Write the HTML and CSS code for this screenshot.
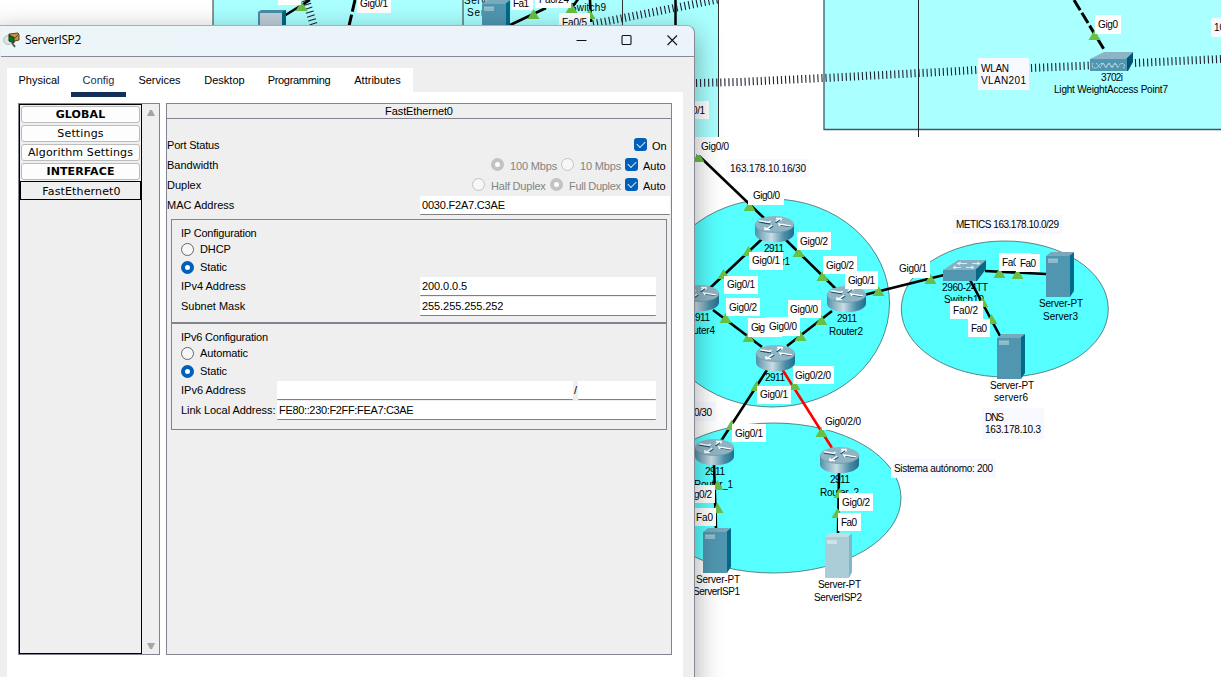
FILE: index.html
```html
<!DOCTYPE html>
<html lang="es">
<head>
<meta charset="utf-8">
<title>ServerISP2</title>
<link rel="stylesheet" href="styles.css">
</head>
<body>
<main class="workspace">
<svg class="topology" width="1221" height="677" viewBox="0 0 1221 677">
  <defs>
    <linearGradient id="metal" x1="0" x2="1" y1="0" y2="0">
      <stop offset="0" stop-color="#4f8fa9"/><stop offset=".15" stop-color="#7fadbf"/><stop offset=".42" stop-color="#c8dce4"/><stop offset=".75" stop-color="#4d8da8"/><stop offset="1" stop-color="#1e6f8c"/>
    </linearGradient>
    <symbol id="router" viewBox="0 0 39 27" overflow="visible">
      <path d="M0 8V18C2 29 37 29 39 18V8Z" fill="url(#metal)"/>
      <ellipse cx="19.5" cy="8.3" rx="19.5" ry="8.3" fill="#8fb4c4"/>
      <path d="M0 8.5C1 19 38 19 39 8.5" fill="none" stroke="#6d9cb0" stroke-width=".8"/>
      <g fill="none" stroke="#164f66" stroke-width="2.2"><path d="M4 5.5L15 7.500M36 10L24 8.500M20.500 6.500L25 3M18 9.500l-6 4"/></g>
      <g fill="none" stroke="#fff" stroke-width="1.5"><path d="M4 4.700L14 6.500l1.500-1.500M36 9.700L24 8l1 2M20.500 5.500L25 2.500M21 2.400h5v2M17.500 9.200l-6.300 4M10 11v2.500h5"/></g>
    </symbol>
    <symbol id="server" viewBox="0 0 28 45" overflow="visible">
      <path d="M0 4L5 0H28L23 4Z" fill="#78a9bd"/>
      <path d="M23 4L28 0V39L24 45H23Z" fill="#006b88"/>
      <path d="M0 4H24V45H0Z" fill="#5096b0"/>
      <path d="M2 7H12V11H2Z" fill="#8fbacb"/>
      <path d="M2 7H12" stroke="#b0d0db" stroke-width=".7"/>
    </symbol>
    <symbol id="server-on" viewBox="0 0 28 45" overflow="visible">
      <path d="M0 4L5 0H27L23 4Z" fill="#c3dde5"/>
      <path d="M23 4L27 0V39L24 45H23Z" fill="#7eb7c8"/>
      <path d="M0 4H24V45H0Z" fill="#abcdd8"/>
      <path d="M2 7H12V11H2Z" fill="#cde2e8"/>
    </symbol>
    <path id="up" d="M-5.500 0L.5-10L6.500 0Z" fill="#68bf45"/>
  </defs>

  <rect width="1221" height="677" fill="#fff"/>
  <path d="M213-1H718.5V137H213Z" fill="#aff"/>
  <path d="M213 0V137M463 0V137M622.500 0V137M718.500 0V137" stroke="#333" fill="none"/>
  <path d="M675.500 0V26" stroke="#000" stroke-width="2.500"/>
  <path d="M824-1H1222V129.500H824Z" fill="#aff" stroke="#456" stroke-width="1.300"/>
  <path d="M918.500 0V137" stroke="#222"/>
  <g fill="#5ff" stroke="#466" stroke-width=".8">
    <ellipse cx="772" cy="303" rx="117.500" ry="104"/>
    <ellipse cx="773.500" cy="498" rx="127.500" ry="75"/>
    <ellipse cx="1004.800" cy="309" rx="103.500" ry="68"/>
  </g>

  <g class="wireless">
    <path d="M696 83L738 82L824 78L950 71.500L977 70"/>
    <path d="M1031 68L1090 65.500"/>
    <path d="M1135 63L1221 59"/>
    <path d="M593 24L720-1"/>
    <path d="M306 0L314 26"/>
  </g>

  <g class="label">
    <text x="1101" y="81" textLength="22">3702i</text>
    <text x="1054" y="93" textLength="114">Light WeightAccess Point7</text>
    <text x="764" y="252" textLength="20">2911</text>
    <text x="758" y="265" textLength="32">Router1</text>
    <text x="837" y="322" textLength="20">2911</text>
    <text x="829" y="335" textLength="34">Router2</text>
    <text x="690" y="321" textLength="20">2911</text>
    <text x="681" y="334" textLength="34">Router4</text>
    <text x="765" y="381" textLength="20">2911</text>
    <text x="942" y="291" textLength="46">2960-24TT</text>
    <text x="944" y="303" textLength="40">Switch10</text>
    <text x="1039" y="307" textLength="44">Server-PT</text>
    <text x="1043" y="320" textLength="35">Server3</text>
    <text x="990" y="389" textLength="44">Server-PT</text>
    <text x="994" y="401" textLength="34">server6</text>
    <text x="696" y="583" textLength="44">Server-PT</text>
    <text x="693" y="595" textLength="47">ServerISP1</text>
    <text x="818" y="588" textLength="43">Server-PT</text>
    <text x="814" y="601" textLength="48">ServerISP2</text>
    <text x="705" y="475" textLength="20">2911</text>
    <text x="694" y="488" textLength="39">Router_1</text>
    <text x="830" y="483" textLength="20">2911</text>
    <text x="820" y="496" textLength="39">Router_2</text>
    <text x="464" y="4" textLength="22">Serv</text>
    <text x="467" y="16" textLength="34">Server</text>
    <text x="570" y="11" textLength="36">Switch9</text>
  </g>

  <g class="link">
    <path d="M697 154L764 218M762 239L710 288M786 240L836 289M866 294.500L944 275M713 310L762 347M832 311L787 346M767 370L721 441M714 465L716 529M839 473L838 534M985 271L1046 274M970 280L1000 336"/>
    <path d="M284 16L310 0M508 26L546 8M573 6L579-2M590 0L591 22"/>
    <path class="alert" d="M782 369L832 448"/>
    <path class="dashed" d="M1074 0L1105 51"/>
    <path class="dashed" d="M355 0L349 26"/>
  </g>

  <g>
    <use href="#router" x="755" y="216" width="39" height="27"/>
    <use href="#router" x="827" y="286" width="39" height="27"/>
    <use href="#router" x="680" y="285" width="39" height="27"/>
    <use href="#router" x="756" y="345" width="39" height="27"/>
    <use href="#router" x="695" y="439" width="39" height="27"/>
    <use href="#router" x="820" y="447" width="39" height="27"/>
    <use href="#server" x="1046" y="252" width="28" height="45"/>
    <use href="#server" x="997" y="334" width="28" height="45"/>
    <use href="#server" x="703" y="528" width="28" height="45"/>
    <use href="#server-on" x="825" y="533" width="28" height="45"/>
    <use href="#server" x="482" y="0" width="28" height="45"/>
    <g transform="translate(943 260)">
      <path d="M0 10L15 0H43L32 10Z" fill="#86b1c2"/><path d="M32 10L43 0V9L34 21H32Z" fill="#096783"/><path d="M0 10H33V21H0Z" fill="#5096b0"/>
      <path d="M15 3.500h9m-6-1.500l-4 1.500 3 1M29 3.500h8m-3-1.500l3 1.500-3 1M10 7.500h8m-5-1.500l-3 1.500 3 1M23 7.500h8m-3-1.500l3 1.500-3 1" fill="none" stroke="#eef8fa" stroke-width=".8"/>
    </g>
    <g transform="translate(1090 52)">
      <path d="M0 7L14 0H43L36 7Z" fill="#8bb5c6"/><path d="M36 7L43 0V10L38 19H36Z" fill="#005570"/><path d="M0 7H37V19H0Z" fill="#5096b0"/>
      <path d="M3 11l-1 2 1 3h4l3-4 3-1 3 4 3-4 3 4 3-4 3 4 3-4 3 1 1 3-2 1M6 11l4 5 3-5 3 5 3-5 3 5 3-5 3 5" fill="none" stroke="#d5ebf1" stroke-width=".8" stroke-dasharray="2 1"/>
    </g>
    <path d="M258 12L261 10H286V26H258Z" fill="#458ea6"/><path d="M282 12L286 10V26H282Z" fill="#006783"/><path d="M260 13H282V26H260Z" fill="#bdcdd6"/>
  </g>

  <g>
    <use href="#up" x="698" y="162"/><use href="#up" x="749" y="211"/><use href="#up" x="748" y="256"/><use href="#up" x="723" y="279"/>
    <use href="#up" x="798" y="257"/><use href="#up" x="822" y="281"/><use href="#up" x="878" y="296"/><use href="#up" x="725" y="323"/>
    <use href="#up" x="821" y="325"/><use href="#up" x="748" y="342"/><use href="#up" x="800" y="341"/><use href="#up" x="756" y="391"/>
    <use href="#up" x="731" y="430"/><use href="#up" x="794" y="390"/><use href="#up" x="821" y="437"/><use href="#up" x="930" y="284"/>
    <use href="#up" x="999" y="278"/><use href="#up" x="1017" y="279"/><use href="#up" x="982" y="307"/><use href="#up" x="991" y="324"/>
    <use href="#up" x="1094" y="40"/><use href="#up" x="717" y="490"/><use href="#up" x="717" y="513"/><use href="#up" x="839" y="498"/>
    <use href="#up" x="837" y="518"/><use href="#up" x="301" y="11"/><use href="#up" x="533" y="19"/><use href="#up" x="571" y="13"/><use href="#up" x="589" y="19"/>
  </g>

  <g class="port">
    <rect x="748" y="187" width="36" height="18"/><text x="753" y="199" textLength="27">Gig0/0</text>
    <rect x="797" y="232" width="34" height="18"/><text x="800" y="245" textLength="28">Gig0/2</text>
    <rect x="749" y="252" width="34" height="18"/><text x="752" y="264" textLength="28">Gig0/1</text>
    <rect x="724" y="276" width="34" height="18"/><text x="727" y="288" textLength="28">Gig0/1</text>
    <rect x="726" y="298" width="34" height="18"/><text x="729" y="311" textLength="28">Gig0/2</text>
    <rect x="788" y="300" width="33" height="18"/><text x="790" y="313" textLength="28">Gig0/0</text>
    <rect x="823" y="256" width="34" height="18"/><text x="826" y="269" textLength="28">Gig0/2</text>
    <rect x="845" y="271" width="33" height="18"/><text x="848" y="284" textLength="27">Gig0/1</text>
    <rect x="748" y="318" width="34" height="19"/><text x="751" y="331" textLength="14">Gig</text>
    <rect x="766" y="317" width="34" height="19"/><text x="769" y="330" textLength="28">Gig0/0</text>
    <rect x="793" y="366" width="41" height="18"/><text x="795" y="379" textLength="36">Gig0/2/0</text>
    <rect x="757" y="386" width="34" height="18"/><text x="760" y="398" textLength="28">Gig0/1</text>
    <rect x="732" y="424" width="34" height="18"/><text x="735" y="437" textLength="28">Gig0/1</text>
    <rect x="822" y="412" width="42" height="18"/><text x="825" y="425" textLength="36">Gig0/2/0</text>
    <rect x="839" y="493" width="34" height="18"/><text x="842" y="506" textLength="28">Gig0/2</text>
    <rect x="838" y="513" width="23" height="18"/><text x="841" y="526" textLength="16">Fa0</text>
    <rect x="683" y="485" width="32" height="18"/><text x="685" y="498" textLength="27">Gig0/2</text>
    <rect x="690" y="508" width="26" height="18"/><text x="696" y="521" textLength="17">Fa0</text>
    <rect x="896" y="259" width="34" height="19"/><text x="899" y="272" textLength="28">Gig0/1</text>
    <rect x="999" y="253" width="32" height="18"/><text x="1002" y="266" textLength="24">Fa0/1</text>
    <rect x="1016" y="254" width="24" height="18"/><text x="1020" y="267" textLength="16">Fa0</text>
    <rect x="950" y="301" width="33" height="18"/><text x="953" y="314" textLength="25">Fa0/2</text>
    <rect x="968" y="319" width="22" height="18"/><text x="971" y="332" textLength="16">Fa0</text>
    <rect x="1095" y="15" width="26" height="19"/><text x="1098" y="28" textLength="20">Gig0</text>
    <rect x="676" y="101" width="33" height="18"/><text x="678" y="114" textLength="27">Gig0/1</text>
    <rect x="697" y="137" width="35" height="18"/><text x="701" y="150" textLength="28">Gig0/0</text>
    <rect x="278" y="-5" width="23" height="10"/>
    <rect x="357" y="-5" width="34" height="18"/><text x="360" y="7" textLength="28">Gig0/1</text>
    <rect x="511" y="-5" width="22" height="15"/><text x="513" y="7" textLength="16">Fa1</text>
    <rect x="535" y="-5" width="36" height="13"/><text x="539" y="3" textLength="30">Fa0/24</text>
    <rect x="559" y="13" width="31" height="18"/><text x="562" y="26" textLength="25">Fa0/5</text>
  </g>

  <g class="note">
    <rect x="726" y="159" width="83" height="19"/><text x="730" y="172" textLength="76">163.178.10.16/30</text>
    <rect x="953" y="215" width="109" height="19"/><text x="956" y="228" textLength="103">METICS 163.178.10.0/29</text>
    <rect x="982" y="408" width="62" height="31"/><text x="985" y="421" textLength="19">DNS</text><text x="985" y="433" textLength="56">163.178.10.3</text>
    <rect x="891" y="459" width="105" height="19"/><text x="894" y="472" textLength="99">Sistema autónomo: 200</text>
    <rect x="680" y="402" width="36" height="19"/><text x="694" y="416" textLength="18">0/30</text>
    <rect x="978" y="58" width="51" height="32"/><text x="981" y="72" textLength="28">WLAN</text><text x="981" y="84" textLength="45">VLAN201</text>
    <rect x="1211" y="18" width="30" height="19"/><text x="1214" y="31">10.</text>
  </g>
</svg>

<section class="window">
  <header class="titlebar">
    <svg class="app-icon" width="17" height="17" viewBox="0 0 17 17">
      <path d="M6 2L15 1 16 3V8L8 10 5 8Z" fill="#c6903d" stroke="#5a4520"/><path d="M6 3l6 3 4-4" fill="none" stroke="#6a4b18"/>
      <ellipse cx="5" cy="8" rx="4.500" ry="4.500" fill="#d9e3df" stroke="#b4beb9"/><path d="M6 3L11 6V11L6 9Z" fill="#087324" stroke="#123d18"/><path d="M9 11l3 4" stroke="#555" stroke-width="1.800"/>
    </svg>
    <h1 class="title">ServerISP2</h1>
    <svg class="controls" width="104" height="12" viewBox="0 0 104 12" fill="none" stroke="#111" stroke-width="1.100"><path d="M.5 6.500h10"/><rect x="46" y="1.500" width="9" height="9" rx="1"/><path d="M91.500 1.500l9.500 9.500M101 1.500L91.500 11"/></svg>
  </header>
  <div class="client">
    <nav class="tabs">
      <span class="tab">Physical</span><span class="tab active">Config</span><span class="tab">Services</span><span class="tab">Desktop</span><span class="tab tight">Programming</span><span class="tab">Attributes</span>
    </nav>
    <div class="page">
      <aside class="sidebar">
        <div class="list">
          <button class="item heading">GLOBAL</button>
          <button class="item">Settings</button>
          <button class="item">Algorithm Settings</button>
          <button class="item heading">INTERFACE</button>
          <button class="item selected">FastEthernet0</button>
        </div>
        <div class="scroll">
          <svg width="8" height="6" viewBox="0 0 8 6"><path d="M0 6L3 0H5L8 6Z" fill="#a5a5a5"/></svg>
          <svg width="8" height="6" viewBox="0 0 8 6"><path d="M0 0L3 6H5L8 0Z" fill="#a5a5a5"/></svg>
        </div>
      </aside>
      <div class="panel">
        <h2 class="panel-title">FastEthernet0</h2>
        <div class="rows">
          <div class="row"><span class="snug">Port Status</span><span class="options"><i class="check"></i><span class="on">On</span></span></div>
          <div class="row"><span>Bandwidth</span><span class="options"><i class="radio off set"></i><span class="muted w100">100 Mbps</span><i class="radio off"></i><span class="muted w10">10 Mbps</span><i class="check"></i><span class="auto">Auto</span></span></div>
          <div class="row"><span>Duplex</span><span class="options"><i class="radio off"></i><span class="muted whalf">Half Duplex</span><i class="radio off set"></i><span class="muted wfull">Full Duplex</span><i class="check"></i><span class="auto">Auto</span></span></div>
          <div class="row"><span>MAC Address</span><span class="field mac">0030.F2A7.C3AE</span></div>
        </div>
        <div class="group">
          <h3 class="legend">IP Configuration</h3>
          <div class="choice"><i class="radio"></i>DHCP</div>
          <div class="choice"><i class="radio set"></i>Static</div>
          <div class="row"><span>IPv4 Address</span><span class="field ip">200.0.0.5</span></div>
          <div class="row"><span>Subnet Mask</span><span class="field ip">255.255.255.252</span></div>
        </div>
        <div class="group six">
          <h3 class="legend">IPv6 Configuration</h3>
          <div class="choice"><i class="radio"></i>Automatic</div>
          <div class="choice"><i class="radio set"></i>Static</div>
          <div class="row"><span>IPv6 Address</span><span class="pair"><span class="field addr"></span><span class="slash">/</span><span class="field prefix"></span></span></div>
          <div class="row"><span class="local">Link Local Address:</span><span class="field link-local">FE80::230:F2FF:FEA7:C3AE</span></div>
        </div>
      </div>
    </div>
  </div>
</section>
</main>
</body>
</html>
```
FILE: styles.css
```css
* { box-sizing: border-box; }
body { margin: 0; background: #fff; color: #000; font: 11px "Liberation Sans", Arial, sans-serif; }
h1, h2, h3 { margin: 0; font-size: inherit; font-weight: normal; }
.workspace { position: relative; width: 1221px; height: 677px; overflow: hidden; }
.topology { display: block; font-size: 10px; }
.wireless { fill: none; stroke: #223; stroke-width: 8; stroke-dasharray: 1.1 2.95; }
.link { fill: none; stroke: #000; stroke-width: 2.6; }
.alert { stroke: #f00; }
.dashed { stroke-width: 3; stroke-dasharray: 12 3; }
.port rect { fill: #fff; }
.note rect { fill: #f8f8ff; }

.window { position: absolute; left: -8px; top: 25px; width: 703px; height: 670px; padding-left: 8px; overflow: hidden; border: 1px solid #858a96; border-top-color: #9bb5ba; border-radius: 8px 8px 0 0; background: #efefef; background-clip: padding-box; box-shadow: 0 8px 28px rgba(0, 0, 0, .36); }
.titlebar { display: flex; align-items: center; height: 31px; padding: 0 14px 2px 2px; border-bottom: 1px solid #858a96; background: linear-gradient(90deg, #ecf5f7, #ebf3fb); }
.app-icon { flex: none; margin-right: 5px; }
.title { font: 12px/20px "Open Sans", sans-serif; letter-spacing: -.4px; }
.controls { margin-left: auto; }
.client { padding: 11px 11px 0 6px; }
.tabs { display: grid; grid-template-columns: 64px 55px 67px 63px 86px 71px; width: 406px; height: 24px; background: #fff; }
.tab { border-bottom: 5px solid transparent; line-height: 24px; text-align: center; white-space: nowrap; }
.tab.active { border-color: #12305a; color: #12305a; }
.tab.tight { letter-spacing: -.3px; }
.page { display: flex; gap: 6px; height: 620px; padding: 11px 11px 0; background: #fff; }
.sidebar { display: flex; flex: none; width: 142px; height: 552px; border: 1px solid #83838f; background: #efefef; }
.list { display: flex; flex-direction: column; gap: 2px; width: 123px; padding: 1px; border: 1px solid #000; }
.item { flex: none; width: 119px; height: 17px; margin: 0; padding: 0; border: 1px solid #bcbcbc; border-radius: 3px; background: #fdfdfd; color: #000; font: 11px/15px "DejaVu Sans", sans-serif; letter-spacing: .15px; white-space: nowrap; }
.heading { font-weight: bold; letter-spacing: .1px; }
.selected { width: 121px; height: 19px; margin: -1px -1px 0 -1px; padding: 2px 0 0 2px; border-color: #000; border-radius: 0; background: #efefef; line-height: 16px; }
.scroll { display: flex; flex: 1; flex-direction: column; align-items: center; justify-content: space-between; padding: 6px 0 5px 1px; }
.panel { flex: none; width: 506px; height: 552px; border: 1px solid #83838f; background: #efefef; }
.panel-title { height: 15px; border-bottom: 1px solid #83838f; line-height: 15px; text-align: center; letter-spacing: -.1px; }
.rows { padding: 16px 1px 0 0; }
.row { display: flex; align-items: center; justify-content: space-between; height: 20px; white-space: nowrap; }
.snug { letter-spacing: -.2px; }
.options { display: flex; align-items: center; height: 15px; margin-top: -1px; padding-right: 4px; }
.options > span { position: relative; top: 1px; }
.check { display: flex; align-items: center; justify-content: center; width: 13px; height: 13px; margin-right: 5px; border-radius: 3px; background: #005fb8; }
.check::after { width: 7px; height: 4px; margin-top: -2px; border: solid #dceaff; border-width: 0 0 1px 1px; content: ""; transform: rotate(-45deg); }
.radio { flex: none; width: 13px; height: 13px; margin-right: 6px; border: 1px solid #666; border-radius: 50%; background: #f7f7f7; }
.radio.set { border: 4px solid #005fb8; background: #fff; }
.radio.off { border-color: #c3c3c3; }
.muted { color: #838383; letter-spacing: -.15px; }
.on { width: 14px; }
.auto { width: 23px; }
.w100 { width: 51px; }
.w10 { width: 45px; }
.whalf { width: 59px; letter-spacing: -.2px; }
.wfull { width: 56px; letter-spacing: -.3px; }
.field { height: 19px; padding-left: 2px; border-bottom: 1px solid #808086; border-radius: 1px; background: #fff; line-height: 18px; }
.mac { width: 250px; letter-spacing: -.2px; }
.group { width: 496px; height: 104px; margin: 4px 0 0 4px; padding: 6px 10px 0 9px; border: 1px solid #83838f; }
.six { height: 107px; margin-top: 0; }
.legend { height: 14px; line-height: 15px; letter-spacing: -.2px; }
.choice { display: flex; align-items: center; height: 18px; letter-spacing: -.1px; }
.ip { width: 236px; letter-spacing: -.08px; }
.pair { display: flex; align-items: center; }
.addr { width: 296px; }
.slash { width: 5px; text-align: center; }
.prefix { width: 78px; }
.local { letter-spacing: -.05px; }
.link-local { width: 379px; letter-spacing: -.34px; }
```
